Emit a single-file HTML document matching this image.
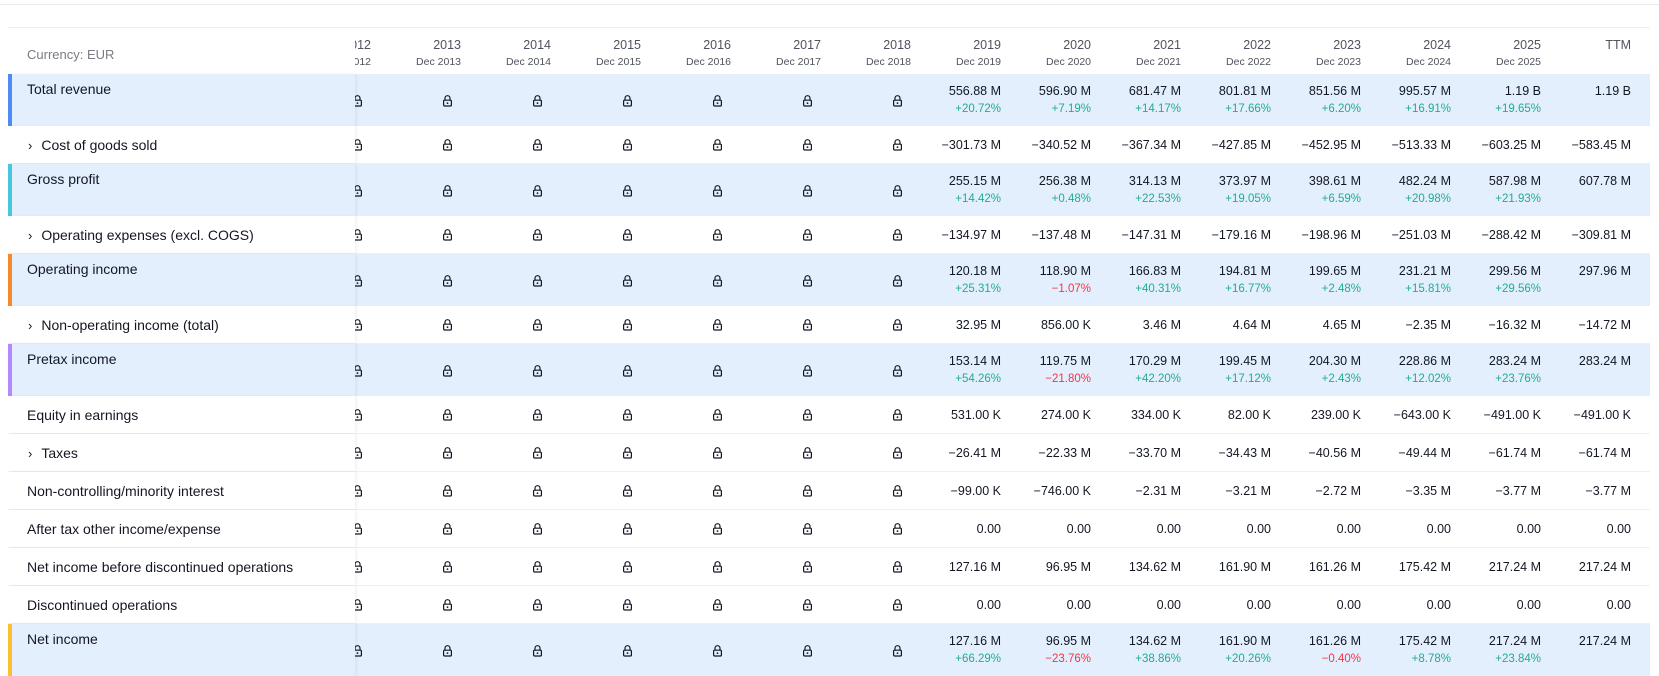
<!DOCTYPE html>
<html><head><meta charset="utf-8">
<style>
*{margin:0;padding:0;box-sizing:border-box}
body{width:1659px;height:673px;background:#fff;font-family:"Liberation Sans","DejaVu Sans",sans-serif;color:#131722;position:relative;overflow:hidden}
.topline{position:absolute;left:0;top:4px;width:1659px;height:1px;background:#e9eaec}
.tbl{position:absolute;left:8px;top:27px;width:1642px;border-top:1px solid #eceef2}
.row{position:relative;height:38px;border-bottom:1px solid #eef0f3;white-space:nowrap}
.row.big{height:52px;background:#e3effd;border-bottom:none}
.hdr{height:46px;border-bottom:none}
.cells{position:absolute;left:273px;top:0;height:100%;display:flex}
.c{width:90px;height:100%;text-align:right;font-size:12.5px;display:flex;flex-direction:column;justify-content:center;align-items:flex-end}
.big .c{justify-content:flex-start;padding-top:8px}
.c .p{font-size:11.5px;line-height:18px;color:#22ab94}
.c .p.r{color:#f23645}
.c .v{line-height:18px}
.lk{padding-right:8px;justify-content:center!important;padding-top:0!important}
.lab{position:absolute;left:0;top:0;width:347px;height:100%;background:#fff;font-size:14px;padding-left:19px;display:flex;align-items:center;box-shadow:2px 0 3px rgba(0,0,0,.05)}
.big .lab{background:#e3effd;align-items:flex-start;padding-top:6px;line-height:18px}
.bar{position:absolute;left:0;top:0;width:4px;height:100%}
.chev{font-size:13px;margin-right:9px;margin-left:1px;position:relative;top:1px}
.hdr .c{justify-content:flex-start;padding-top:8px;color:#50535e}
.hdr .y{font-size:12.5px;line-height:18px}
.hdr .d{font-size:10.5px;line-height:16px}
.hdr .lab{color:#787b86;font-size:13px;padding-top:6px}
</style></head><body>
<svg width="0" height="0" style="position:absolute"><defs><symbol id="lk" viewBox="0 0 11 13"><path d="M3 6.2V4.2a2.5 2.5 0 0 1 5 0v2" fill="none" stroke="#131722" stroke-width="1.2"/><rect x="1.6" y="6.2" width="7.8" height="5.8" rx="1" fill="none" stroke="#131722" stroke-width="1.2"/><circle cx="5.5" cy="9.1" r=".9" fill="#131722"/></symbol></defs></svg>
<div class="topline"></div>
<div class="tbl">
<div class="row hdr"><div class="cells">
<div class="c"><span class="y">2012</span><span class="d">Dec 2012</span></div>
<div class="c"><span class="y">2013</span><span class="d">Dec 2013</span></div>
<div class="c"><span class="y">2014</span><span class="d">Dec 2014</span></div>
<div class="c"><span class="y">2015</span><span class="d">Dec 2015</span></div>
<div class="c"><span class="y">2016</span><span class="d">Dec 2016</span></div>
<div class="c"><span class="y">2017</span><span class="d">Dec 2017</span></div>
<div class="c"><span class="y">2018</span><span class="d">Dec 2018</span></div>
<div class="c"><span class="y">2019</span><span class="d">Dec 2019</span></div>
<div class="c"><span class="y">2020</span><span class="d">Dec 2020</span></div>
<div class="c"><span class="y">2021</span><span class="d">Dec 2021</span></div>
<div class="c"><span class="y">2022</span><span class="d">Dec 2022</span></div>
<div class="c"><span class="y">2023</span><span class="d">Dec 2023</span></div>
<div class="c"><span class="y">2024</span><span class="d">Dec 2024</span></div>
<div class="c"><span class="y">2025</span><span class="d">Dec 2025</span></div>
<div class="c"><span class="y">TTM</span></div>
</div><div class="lab" style="box-shadow:none">Currency: EUR</div></div>

<div class="row big"><div class="cells">
<div class="c lk"><svg width="11" height="13"><use href="#lk"/></svg></div><div class="c lk"><svg width="11" height="13"><use href="#lk"/></svg></div><div class="c lk"><svg width="11" height="13"><use href="#lk"/></svg></div><div class="c lk"><svg width="11" height="13"><use href="#lk"/></svg></div><div class="c lk"><svg width="11" height="13"><use href="#lk"/></svg></div><div class="c lk"><svg width="11" height="13"><use href="#lk"/></svg></div><div class="c lk"><svg width="11" height="13"><use href="#lk"/></svg></div>
<div class="c"><span class="v">556.88 M</span><span class="p">+20.72%</span></div>
<div class="c"><span class="v">596.90 M</span><span class="p">+7.19%</span></div>
<div class="c"><span class="v">681.47 M</span><span class="p">+14.17%</span></div>
<div class="c"><span class="v">801.81 M</span><span class="p">+17.66%</span></div>
<div class="c"><span class="v">851.56 M</span><span class="p">+6.20%</span></div>
<div class="c"><span class="v">995.57 M</span><span class="p">+16.91%</span></div>
<div class="c"><span class="v">1.19 B</span><span class="p">+19.65%</span></div>
<div class="c"><span class="v">1.19 B</span></div>
</div><div class="lab"><div class="bar" style="background:#4c8bf5"></div>Total revenue</div></div>

<div class="row"><div class="cells">
<div class="c lk"><svg width="11" height="13"><use href="#lk"/></svg></div><div class="c lk"><svg width="11" height="13"><use href="#lk"/></svg></div><div class="c lk"><svg width="11" height="13"><use href="#lk"/></svg></div><div class="c lk"><svg width="11" height="13"><use href="#lk"/></svg></div><div class="c lk"><svg width="11" height="13"><use href="#lk"/></svg></div><div class="c lk"><svg width="11" height="13"><use href="#lk"/></svg></div><div class="c lk"><svg width="11" height="13"><use href="#lk"/></svg></div>
<div class="c">−301.73 M</div><div class="c">−340.52 M</div><div class="c">−367.34 M</div><div class="c">−427.85 M</div><div class="c">−452.95 M</div><div class="c">−513.33 M</div><div class="c">−603.25 M</div><div class="c">−583.45 M</div>
</div><div class="lab"><span class="chev">›</span>Cost of goods sold</div></div>

<div class="row big"><div class="cells">
<div class="c lk"><svg width="11" height="13"><use href="#lk"/></svg></div><div class="c lk"><svg width="11" height="13"><use href="#lk"/></svg></div><div class="c lk"><svg width="11" height="13"><use href="#lk"/></svg></div><div class="c lk"><svg width="11" height="13"><use href="#lk"/></svg></div><div class="c lk"><svg width="11" height="13"><use href="#lk"/></svg></div><div class="c lk"><svg width="11" height="13"><use href="#lk"/></svg></div><div class="c lk"><svg width="11" height="13"><use href="#lk"/></svg></div>
<div class="c"><span class="v">255.15 M</span><span class="p">+14.42%</span></div>
<div class="c"><span class="v">256.38 M</span><span class="p">+0.48%</span></div>
<div class="c"><span class="v">314.13 M</span><span class="p">+22.53%</span></div>
<div class="c"><span class="v">373.97 M</span><span class="p">+19.05%</span></div>
<div class="c"><span class="v">398.61 M</span><span class="p">+6.59%</span></div>
<div class="c"><span class="v">482.24 M</span><span class="p">+20.98%</span></div>
<div class="c"><span class="v">587.98 M</span><span class="p">+21.93%</span></div>
<div class="c"><span class="v">607.78 M</span></div>
</div><div class="lab"><div class="bar" style="background:#45c8dc"></div>Gross profit</div></div>

<div class="row"><div class="cells">
<div class="c lk"><svg width="11" height="13"><use href="#lk"/></svg></div><div class="c lk"><svg width="11" height="13"><use href="#lk"/></svg></div><div class="c lk"><svg width="11" height="13"><use href="#lk"/></svg></div><div class="c lk"><svg width="11" height="13"><use href="#lk"/></svg></div><div class="c lk"><svg width="11" height="13"><use href="#lk"/></svg></div><div class="c lk"><svg width="11" height="13"><use href="#lk"/></svg></div><div class="c lk"><svg width="11" height="13"><use href="#lk"/></svg></div>
<div class="c">−134.97 M</div><div class="c">−137.48 M</div><div class="c">−147.31 M</div><div class="c">−179.16 M</div><div class="c">−198.96 M</div><div class="c">−251.03 M</div><div class="c">−288.42 M</div><div class="c">−309.81 M</div>
</div><div class="lab"><span class="chev">›</span>Operating expenses (excl. COGS)</div></div>

<div class="row big"><div class="cells">
<div class="c lk"><svg width="11" height="13"><use href="#lk"/></svg></div><div class="c lk"><svg width="11" height="13"><use href="#lk"/></svg></div><div class="c lk"><svg width="11" height="13"><use href="#lk"/></svg></div><div class="c lk"><svg width="11" height="13"><use href="#lk"/></svg></div><div class="c lk"><svg width="11" height="13"><use href="#lk"/></svg></div><div class="c lk"><svg width="11" height="13"><use href="#lk"/></svg></div><div class="c lk"><svg width="11" height="13"><use href="#lk"/></svg></div>
<div class="c"><span class="v">120.18 M</span><span class="p">+25.31%</span></div>
<div class="c"><span class="v">118.90 M</span><span class="p r">−1.07%</span></div>
<div class="c"><span class="v">166.83 M</span><span class="p">+40.31%</span></div>
<div class="c"><span class="v">194.81 M</span><span class="p">+16.77%</span></div>
<div class="c"><span class="v">199.65 M</span><span class="p">+2.48%</span></div>
<div class="c"><span class="v">231.21 M</span><span class="p">+15.81%</span></div>
<div class="c"><span class="v">299.56 M</span><span class="p">+29.56%</span></div>
<div class="c"><span class="v">297.96 M</span></div>
</div><div class="lab"><div class="bar" style="background:#f7892b"></div>Operating income</div></div>

<div class="row"><div class="cells">
<div class="c lk"><svg width="11" height="13"><use href="#lk"/></svg></div><div class="c lk"><svg width="11" height="13"><use href="#lk"/></svg></div><div class="c lk"><svg width="11" height="13"><use href="#lk"/></svg></div><div class="c lk"><svg width="11" height="13"><use href="#lk"/></svg></div><div class="c lk"><svg width="11" height="13"><use href="#lk"/></svg></div><div class="c lk"><svg width="11" height="13"><use href="#lk"/></svg></div><div class="c lk"><svg width="11" height="13"><use href="#lk"/></svg></div>
<div class="c">32.95 M</div><div class="c">856.00 K</div><div class="c">3.46 M</div><div class="c">4.64 M</div><div class="c">4.65 M</div><div class="c">−2.35 M</div><div class="c">−16.32 M</div><div class="c">−14.72 M</div>
</div><div class="lab"><span class="chev">›</span>Non-operating income (total)</div></div>

<div class="row big"><div class="cells">
<div class="c lk"><svg width="11" height="13"><use href="#lk"/></svg></div><div class="c lk"><svg width="11" height="13"><use href="#lk"/></svg></div><div class="c lk"><svg width="11" height="13"><use href="#lk"/></svg></div><div class="c lk"><svg width="11" height="13"><use href="#lk"/></svg></div><div class="c lk"><svg width="11" height="13"><use href="#lk"/></svg></div><div class="c lk"><svg width="11" height="13"><use href="#lk"/></svg></div><div class="c lk"><svg width="11" height="13"><use href="#lk"/></svg></div>
<div class="c"><span class="v">153.14 M</span><span class="p">+54.26%</span></div>
<div class="c"><span class="v">119.75 M</span><span class="p r">−21.80%</span></div>
<div class="c"><span class="v">170.29 M</span><span class="p">+42.20%</span></div>
<div class="c"><span class="v">199.45 M</span><span class="p">+17.12%</span></div>
<div class="c"><span class="v">204.30 M</span><span class="p">+2.43%</span></div>
<div class="c"><span class="v">228.86 M</span><span class="p">+12.02%</span></div>
<div class="c"><span class="v">283.24 M</span><span class="p">+23.76%</span></div>
<div class="c"><span class="v">283.24 M</span></div>
</div><div class="lab"><div class="bar" style="background:#b388ff"></div>Pretax income</div></div>

<div class="row"><div class="cells">
<div class="c lk"><svg width="11" height="13"><use href="#lk"/></svg></div><div class="c lk"><svg width="11" height="13"><use href="#lk"/></svg></div><div class="c lk"><svg width="11" height="13"><use href="#lk"/></svg></div><div class="c lk"><svg width="11" height="13"><use href="#lk"/></svg></div><div class="c lk"><svg width="11" height="13"><use href="#lk"/></svg></div><div class="c lk"><svg width="11" height="13"><use href="#lk"/></svg></div><div class="c lk"><svg width="11" height="13"><use href="#lk"/></svg></div>
<div class="c">531.00 K</div><div class="c">274.00 K</div><div class="c">334.00 K</div><div class="c">82.00 K</div><div class="c">239.00 K</div><div class="c">−643.00 K</div><div class="c">−491.00 K</div><div class="c">−491.00 K</div>
</div><div class="lab">Equity in earnings</div></div>

<div class="row"><div class="cells">
<div class="c lk"><svg width="11" height="13"><use href="#lk"/></svg></div><div class="c lk"><svg width="11" height="13"><use href="#lk"/></svg></div><div class="c lk"><svg width="11" height="13"><use href="#lk"/></svg></div><div class="c lk"><svg width="11" height="13"><use href="#lk"/></svg></div><div class="c lk"><svg width="11" height="13"><use href="#lk"/></svg></div><div class="c lk"><svg width="11" height="13"><use href="#lk"/></svg></div><div class="c lk"><svg width="11" height="13"><use href="#lk"/></svg></div>
<div class="c">−26.41 M</div><div class="c">−22.33 M</div><div class="c">−33.70 M</div><div class="c">−34.43 M</div><div class="c">−40.56 M</div><div class="c">−49.44 M</div><div class="c">−61.74 M</div><div class="c">−61.74 M</div>
</div><div class="lab"><span class="chev">›</span>Taxes</div></div>

<div class="row"><div class="cells">
<div class="c lk"><svg width="11" height="13"><use href="#lk"/></svg></div><div class="c lk"><svg width="11" height="13"><use href="#lk"/></svg></div><div class="c lk"><svg width="11" height="13"><use href="#lk"/></svg></div><div class="c lk"><svg width="11" height="13"><use href="#lk"/></svg></div><div class="c lk"><svg width="11" height="13"><use href="#lk"/></svg></div><div class="c lk"><svg width="11" height="13"><use href="#lk"/></svg></div><div class="c lk"><svg width="11" height="13"><use href="#lk"/></svg></div>
<div class="c">−99.00 K</div><div class="c">−746.00 K</div><div class="c">−2.31 M</div><div class="c">−3.21 M</div><div class="c">−2.72 M</div><div class="c">−3.35 M</div><div class="c">−3.77 M</div><div class="c">−3.77 M</div>
</div><div class="lab">Non-controlling/minority interest</div></div>

<div class="row"><div class="cells">
<div class="c lk"><svg width="11" height="13"><use href="#lk"/></svg></div><div class="c lk"><svg width="11" height="13"><use href="#lk"/></svg></div><div class="c lk"><svg width="11" height="13"><use href="#lk"/></svg></div><div class="c lk"><svg width="11" height="13"><use href="#lk"/></svg></div><div class="c lk"><svg width="11" height="13"><use href="#lk"/></svg></div><div class="c lk"><svg width="11" height="13"><use href="#lk"/></svg></div><div class="c lk"><svg width="11" height="13"><use href="#lk"/></svg></div>
<div class="c">0.00</div><div class="c">0.00</div><div class="c">0.00</div><div class="c">0.00</div><div class="c">0.00</div><div class="c">0.00</div><div class="c">0.00</div><div class="c">0.00</div>
</div><div class="lab">After tax other income/expense</div></div>

<div class="row"><div class="cells">
<div class="c lk"><svg width="11" height="13"><use href="#lk"/></svg></div><div class="c lk"><svg width="11" height="13"><use href="#lk"/></svg></div><div class="c lk"><svg width="11" height="13"><use href="#lk"/></svg></div><div class="c lk"><svg width="11" height="13"><use href="#lk"/></svg></div><div class="c lk"><svg width="11" height="13"><use href="#lk"/></svg></div><div class="c lk"><svg width="11" height="13"><use href="#lk"/></svg></div><div class="c lk"><svg width="11" height="13"><use href="#lk"/></svg></div>
<div class="c">127.16 M</div><div class="c">96.95 M</div><div class="c">134.62 M</div><div class="c">161.90 M</div><div class="c">161.26 M</div><div class="c">175.42 M</div><div class="c">217.24 M</div><div class="c">217.24 M</div>
</div><div class="lab">Net income before discontinued operations</div></div>

<div class="row"><div class="cells">
<div class="c lk"><svg width="11" height="13"><use href="#lk"/></svg></div><div class="c lk"><svg width="11" height="13"><use href="#lk"/></svg></div><div class="c lk"><svg width="11" height="13"><use href="#lk"/></svg></div><div class="c lk"><svg width="11" height="13"><use href="#lk"/></svg></div><div class="c lk"><svg width="11" height="13"><use href="#lk"/></svg></div><div class="c lk"><svg width="11" height="13"><use href="#lk"/></svg></div><div class="c lk"><svg width="11" height="13"><use href="#lk"/></svg></div>
<div class="c">0.00</div><div class="c">0.00</div><div class="c">0.00</div><div class="c">0.00</div><div class="c">0.00</div><div class="c">0.00</div><div class="c">0.00</div><div class="c">0.00</div>
</div><div class="lab">Discontinued operations</div></div>

<div class="row big"><div class="cells">
<div class="c lk"><svg width="11" height="13"><use href="#lk"/></svg></div><div class="c lk"><svg width="11" height="13"><use href="#lk"/></svg></div><div class="c lk"><svg width="11" height="13"><use href="#lk"/></svg></div><div class="c lk"><svg width="11" height="13"><use href="#lk"/></svg></div><div class="c lk"><svg width="11" height="13"><use href="#lk"/></svg></div><div class="c lk"><svg width="11" height="13"><use href="#lk"/></svg></div><div class="c lk"><svg width="11" height="13"><use href="#lk"/></svg></div>
<div class="c"><span class="v">127.16 M</span><span class="p">+66.29%</span></div>
<div class="c"><span class="v">96.95 M</span><span class="p r">−23.76%</span></div>
<div class="c"><span class="v">134.62 M</span><span class="p">+38.86%</span></div>
<div class="c"><span class="v">161.90 M</span><span class="p">+20.26%</span></div>
<div class="c"><span class="v">161.26 M</span><span class="p r">−0.40%</span></div>
<div class="c"><span class="v">175.42 M</span><span class="p">+8.78%</span></div>
<div class="c"><span class="v">217.24 M</span><span class="p">+23.84%</span></div>
<div class="c"><span class="v">217.24 M</span></div>
</div><div class="lab"><div class="bar" style="background:#fbc02d"></div>Net income</div></div>
</div>
</body></html>
